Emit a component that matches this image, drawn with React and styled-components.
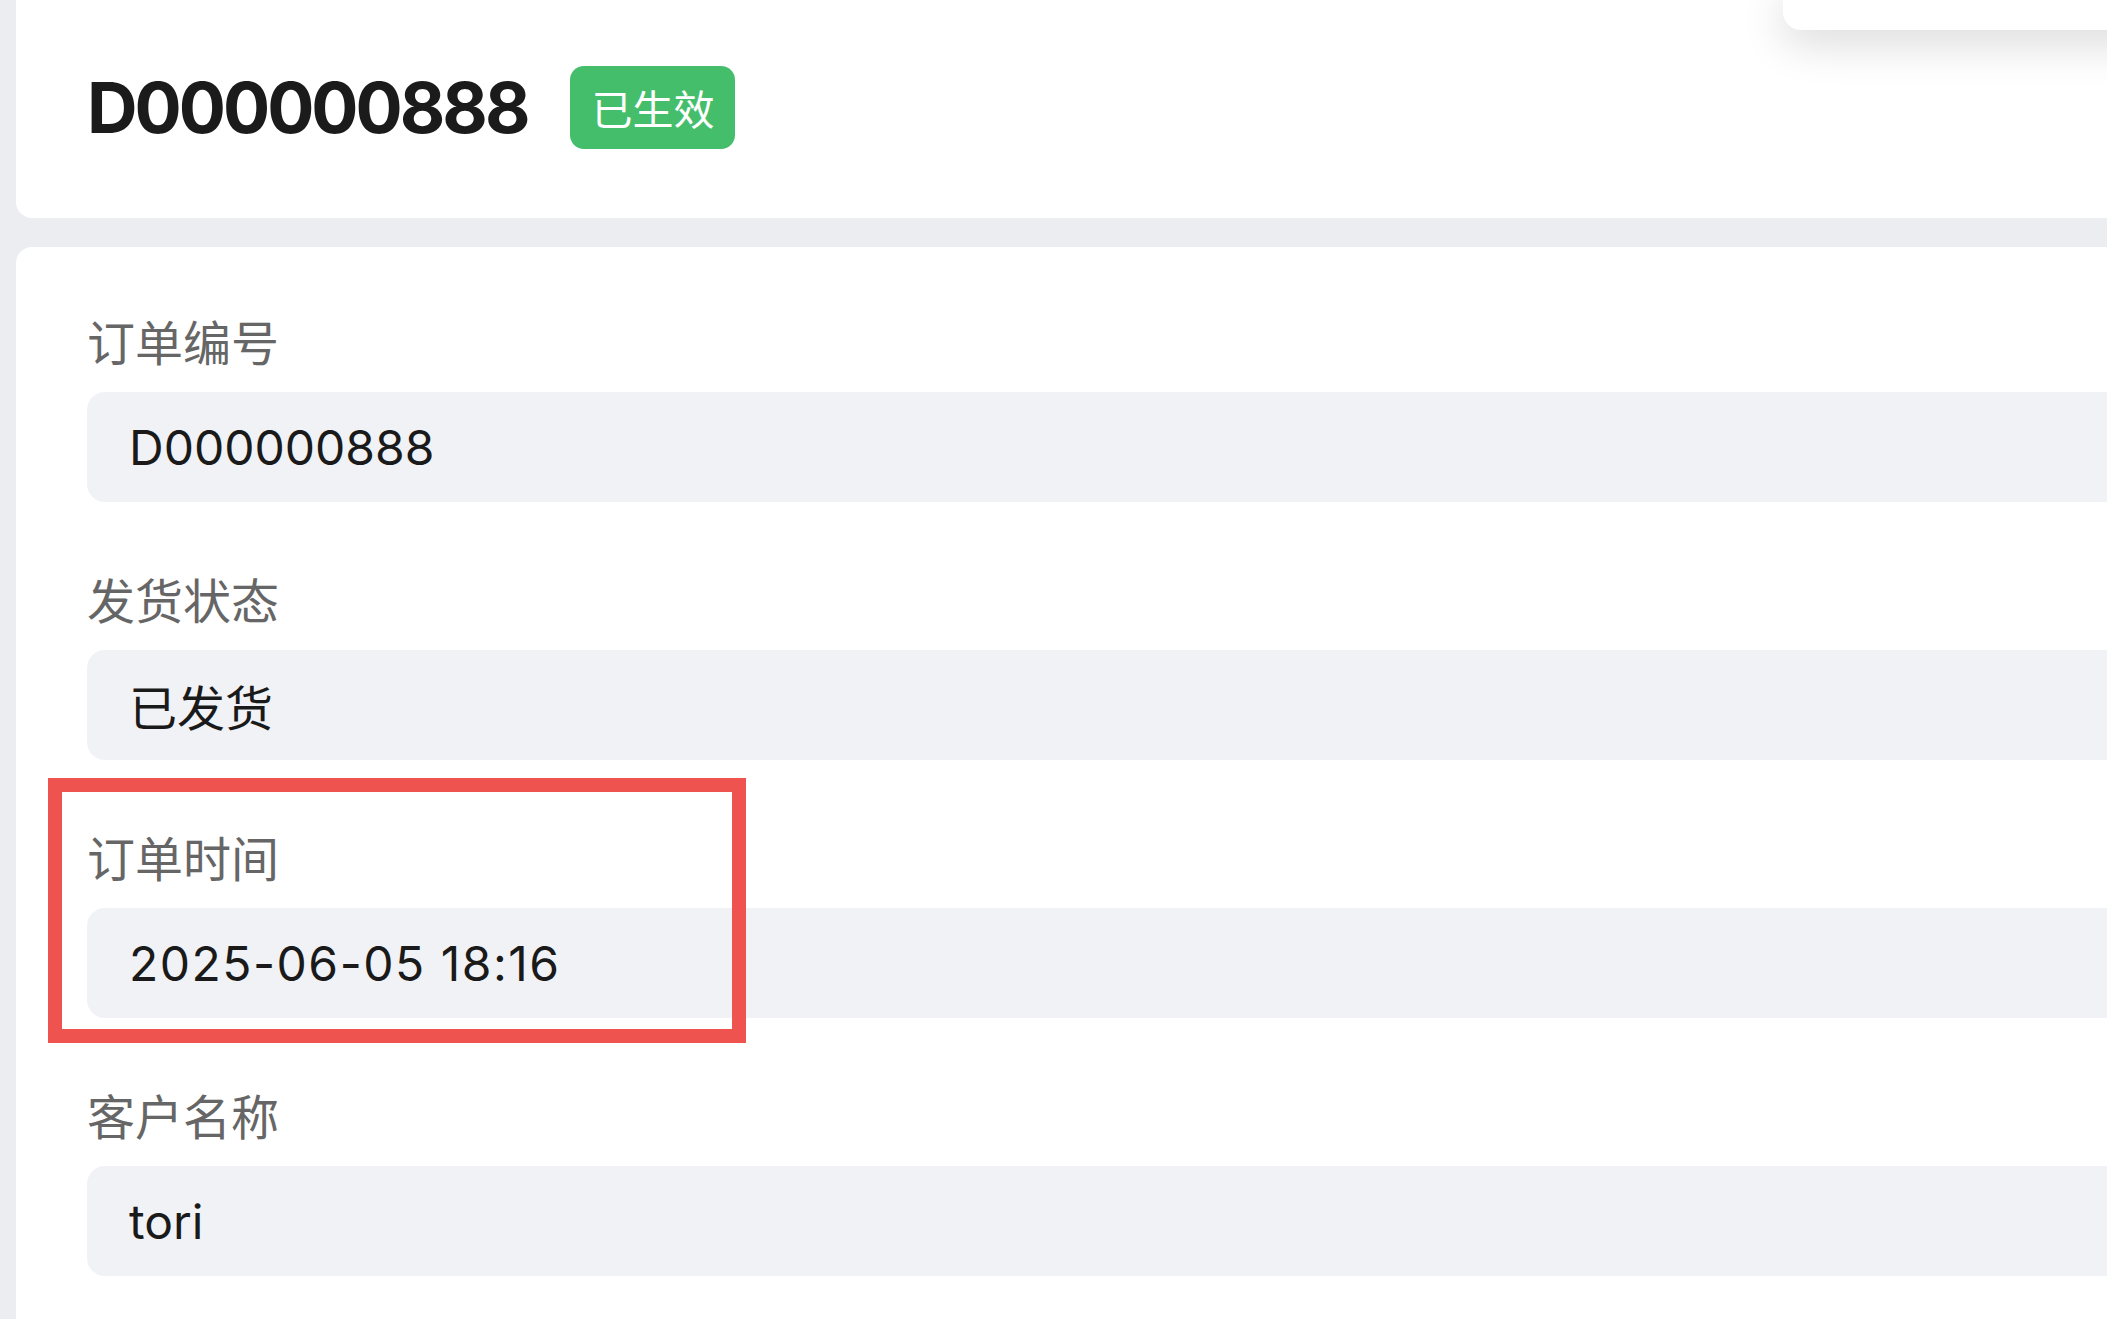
import styled, { createGlobalStyle } from 'styled-components';

const GlobalStyle = createGlobalStyle`
  html, body {
    margin: 0;
    padding: 0;
    background: #ecedf1;
    overflow: hidden;
  }
  body {
    font-family: Inter, "Noto Sans CJK SC", sans-serif;
    color: #1b1b1b;
  }
`;

const Page = styled.div`
  position: relative;
  min-height: 100vh;
  padding-left: 16px;
  display: flex;
  flex-direction: column;
  gap: 29px;
`;

const HeaderCard = styled.div`
  height: 218px;
  margin-right: -60px;
  background: #fff;
  border-radius: 0 0 16px 16px;
  display: flex;
  align-items: center;
  gap: 43px;
  padding: 0 71px 4px;
  box-sizing: border-box;
`;

const Title = styled.h1`
  margin: 0;
  font-size: 70px;
  font-weight: 700;
  letter-spacing: -3px;
  color: #1b1b1b;
`;

const Badge = styled.span`
  display: inline-flex;
  align-items: center;
  height: 83px;
  padding: 0 21px;
  border-radius: 14px;
  background: #45be6c;
  color: #fff;
  font-size: 41px;
  font-family: "Noto Sans CJK SC", sans-serif;
`;

const Popover = styled.div`
  position: absolute;
  top: -20px;
  left: 1783px;
  width: 400px;
  height: 50px;
  background: #fff;
  border-radius: 18px;
  box-shadow: 0 14px 44px rgba(0, 0, 0, 0.14);
`;

const FormCard = styled.div`
  flex: 1;
  margin-right: -200px;
  background: #fff;
  border-radius: 16px 16px 0 0;
  padding: 60px 71px 0;
`;

const Field = styled.div`
  position: relative;
  margin-bottom: 63px;
`;

const Label = styled.div`
  font-family: "Noto Sans CJK SC", sans-serif;
  font-size: 48px;
  line-height: 66px;
  color: #666;
  margin-bottom: 19px;
`;

const Value = styled.div`
  height: 110px;
  display: flex;
  align-items: center;
  padding: 0 42px;
  border-radius: 18px;
  background: #f1f2f6;
  font-size: 48px;
  letter-spacing: ${(p) => (p.$spaced ? '1.5px' : '0')};
  color: #1a1a1a;
  font-family: Inter, "Noto Sans CJK SC", sans-serif;
`;

const Highlight = styled.div`
  position: absolute;
  top: -45px;
  left: -39px;
  width: 698px;
  height: 265px;
  box-sizing: border-box;
  border: 14px solid #ee5350;
  pointer-events: none;
`;

const fields = [
  { label: '订单编号', value: 'D000000888' },
  { label: '发货状态', value: '已发货' },
  { label: '订单时间', value: '2025-06-05 18:16', marked: true, spaced: true },
  { label: '客户名称', value: 'tori' },
];

const App = () => (
  <Page>
    <GlobalStyle />
    <HeaderCard>
      <Title>D000000888</Title>
      <Badge>已生效</Badge>
    </HeaderCard>
    <FormCard>
      {fields.map((f) => (
        <Field key={f.label}>
          <Label>{f.label}</Label>
          <Value $spaced={f.spaced}>{f.value}</Value>
          {f.marked && <Highlight />}
        </Field>
      ))}
    </FormCard>
    <Popover />
  </Page>
);

export default App;
